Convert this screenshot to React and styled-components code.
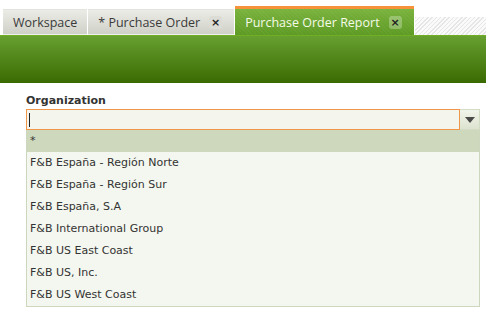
import React from 'react';
import styled, { createGlobalStyle } from 'styled-components';

const GlobalStyle = createGlobalStyle`
  html, body {
    margin: 0;
    padding: 0;
    background: #fff;
  }
  body {
    font-family: "DejaVu Sans", Verdana, sans-serif;
  }
`;

const Page = styled.div`
  width: 486px;
  height: 316px;
  overflow: hidden;
  background: #fff;
`;

const TabStrip = styled.div`
  height: 35px;
  display: flex;
  align-items: flex-end;
  padding-left: 3px;
  background: #fff;
`;

const Tab = styled.div`
  height: ${(p) => (p.active ? '26px' : '24px')};
  display: flex;
  align-items: center;
  gap: 9px;
  padding: 0 ${(p) => (p.closable ? '12px' : '10px')} 0 10px;
  margin-right: 1px;
  font-family: "Open Sans", "DejaVu Sans", sans-serif;
  font-size: 12.5px;
  color: ${(p) => (p.active ? '#f4fbe8' : '#3a3a3a')};
  background: ${(p) =>
    p.active
      ? 'repeating-linear-gradient(45deg, rgba(255,255,255,0.04) 0 1px, transparent 1px 3px), linear-gradient(#7ab33e, #5d9a24)'
      : 'linear-gradient(#ecece6, #cfd0c8)'};
  border-top: ${(p) => (p.active ? '3px solid #f6923a' : '1px solid #e4e4de')};
  border-bottom: ${(p) => (p.active ? 'none' : '1px solid #f0f0ec')};
  box-sizing: content-box;
  white-space: nowrap;
`;

const CloseBox = styled.span`
  width: 13px;
  height: 13px;
  border-radius: 3px;
  display: inline-flex;
  align-items: center;
  justify-content: center;
  background: ${(p) => (p.active ? 'rgba(255,255,255,0.28)' : '#dcdcd6')};
  color: #222;
  font-family: "DejaVu Sans", sans-serif;
  font-size: 11px;
  font-weight: bold;
  line-height: 1;
`;

const Filler = styled.div`
  flex: 1;
  height: 18px;
  background: repeating-linear-gradient(135deg, #e6e6e6 0 1px, #fafafa 1px 3px);
`;

const Header = styled.div`
  height: 47px;
  border-top: 1px solid #72ad26;
  background: linear-gradient(#67a030, #3a6a02);
`;

const Form = styled.div`
  padding: 11px 6px 0 26px;
`;

const Label = styled.div`
  font-size: 11px;
  font-weight: bold;
  color: #333;
  height: 13px;
  line-height: 13px;
  margin-bottom: 2px;
`;

const ComboRow = styled.div`
  display: flex;
  height: 21px;
`;

const Input = styled.div`
  flex: 1;
  border: 1px solid #f0964a;
  background: #f4f6ee;
  display: flex;
  align-items: center;
  padding-left: 2px;
`;

const Caret = styled.span`
  width: 1px;
  height: 14px;
  background: #222;
`;

const DropButton = styled.div`
  width: 19px;
  border: 1px solid #d2dbc4;
  border-left: none;
  background: linear-gradient(#f1f4ea, #dde3d0);
  display: flex;
  align-items: center;
  justify-content: center;
`;

const List = styled.div`
  border: 1px solid #cdd7bd;
  border-top: none;
  background: #f4f7ef;
`;

const Item = styled.div`
  height: 22px;
  line-height: 22px;
  padding-left: 3px;
  font-size: 11px;
  color: #333;
  background: ${(p) => (p.selected ? '#cdd8bc' : 'transparent')};
`;

const items = [
  'F&B España - Región Norte',
  'F&B España - Región Sur',
  'F&B España, S.A',
  'F&B International Group',
  'F&B US East Coast',
  'F&B US, Inc.',
  'F&B US West Coast',
];

export default function App() {
  return (
    <Page>
      <GlobalStyle />
      <TabStrip>
        <Tab>Workspace</Tab>
        <Tab closable>
          * Purchase Order <CloseBox>×</CloseBox>
        </Tab>
        <Tab active closable>
          Purchase Order Report <CloseBox active>×</CloseBox>
        </Tab>
        <Filler />
      </TabStrip>
      <Header />
      <Form>
        <Label>Organization</Label>
        <ComboRow>
          <Input>
            <Caret />
          </Input>
          <DropButton>
            <svg width="10" height="6" viewBox="0 0 10 6">
              <path d="M0 0 H10 L5 6 Z" fill="#4a4a4a" />
            </svg>
          </DropButton>
        </ComboRow>
        <List>
          <Item selected>*</Item>
          {items.map((name) => (
            <Item key={name}>{name}</Item>
          ))}
        </List>
      </Form>
    </Page>
  );
}
